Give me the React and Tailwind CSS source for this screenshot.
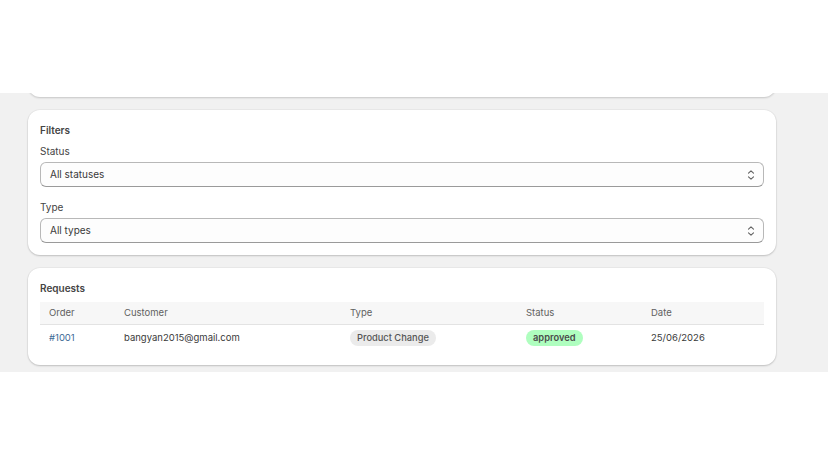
import React from 'react';

const requests = [
  { order: '#1001', customer: 'bangyan2015@gmail.com', type: 'Product Change', status: 'approved', date: '25/06/2026' }
];

const SelectIcon = () => (
  <svg width="8" height="12" viewBox="0 0 8 12" fill="none" stroke="#616161" strokeWidth="1.1" strokeLinecap="round" strokeLinejoin="round">
    <path d="M1.5 4.2 4 1.8l2.5 2.4" />
    <path d="M1.5 7.8 4 10.2l2.5-2.4" />
  </svg>
);

const Select = ({ value }) => (
  <div className="flex h-[25px] items-center justify-between rounded-[6px] border border-[#b8b8b8] border-b-[#9a9a9a] bg-[#fdfdfd] pl-[9px] pr-[8px]">
    <span className="text-[10px] text-[#3a3a3a]">{value}</span>
    <SelectIcon />
  </div>
);

const Card = ({ children, className = '' }) => (
  <div className={`rounded-[12px] bg-white shadow-[0_1px_2px_rgba(0,0,0,0.18),0_0_0_1px_rgba(0,0,0,0.03)] ${className}`}>
    {children}
  </div>
);

const App = () => {
  return (
    <div className="min-h-[466px] bg-white font-['Inter','Liberation_Sans',sans-serif] text-[#303030]">
      <div className="h-[93px]" />
      <div className="h-[279px] overflow-hidden bg-[#f1f1f1] pl-[28px] pr-[52px]">
        {/* bottom of the card above, scrolled out of view */}
        <div className="-mt-[20px] h-[24px] rounded-b-[12px] bg-white shadow-[0_1px_2px_rgba(0,0,0,0.18)]" />

        <Card className="mt-[13px] px-[12px] pb-[12px] pt-[14px]">
          <p className="text-[10px] font-semibold leading-[13px] text-[#454545]">Filters</p>
          <p className="mt-[8px] text-[10px] leading-[13px] text-[#454545]">Status</p>
          <div className="mt-[4px]">
            <Select value="All statuses" />
          </div>
          <p className="mt-[14px] text-[10px] leading-[13px] text-[#454545]">Type</p>
          <div className="mt-[4px]">
            <Select value="All types" />
          </div>
        </Card>

        <Card className="mt-[13px] px-[12px] pb-[13px] pt-[14px]">
          <p className="text-[10px] font-semibold leading-[13px] text-[#454545]">Requests</p>
          <table className="mt-[7px] w-full border-collapse text-left text-[9.5px]">
            <thead>
              <tr className="h-[22px] border-b border-[#e3e3e3] bg-[#f7f7f7] text-[#616161]">
                <th className="w-[84px] pl-[9px] font-normal">Order</th>
                <th className="w-[226px] font-normal">Customer</th>
                <th className="w-[176px] font-normal">Type</th>
                <th className="w-[125px] font-normal">Status</th>
                <th className="font-normal">Date</th>
              </tr>
            </thead>
            <tbody>
              {requests.map((r) => (
                <tr key={r.order} className="h-[28px]">
                  <td className="pl-[9px] text-[#3d6b96]">{r.order}</td>
                  <td className="text-[#3a3a3a]">{r.customer}</td>
                  <td>
                    <span className="inline-block rounded-full bg-[#ebebeb] px-[7px] py-[1px] text-[9.3px] font-medium text-[#555]">
                      {r.type}
                    </span>
                  </td>
                  <td>
                    <span className="inline-block rounded-full bg-[#affebf] px-[7px] py-[1px] text-[9.3px] font-semibold text-[#4a4a4a]">
                      {r.status}
                    </span>
                  </td>
                  <td className="text-[#3a3a3a]">{r.date}</td>
                </tr>
              ))}
            </tbody>
          </table>
        </Card>
      </div>
    </div>
  );
};

export default App;
